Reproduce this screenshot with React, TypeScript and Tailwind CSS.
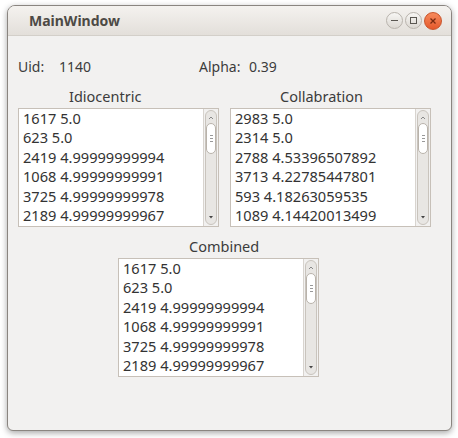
import React from 'react';

const idio = ['1617 5.0', '623 5.0', '2419 4.99999999994', '1068 4.99999999991', '3725 4.99999999978', '2189 4.99999999967'];
const collab = ['2983 5.0', '2314 5.0', '2788 4.53396507892', '3713 4.22785447801', '593 4.18263059535', '1089 4.14420013499'];

function ScrollBar() {
  return (
    <div className="w-[15px] h-full border-l border-[#d8d4cf] bg-[#f2f1f0] flex flex-col items-center py-[1px]">
      <div className="w-[12px] flex-1 rounded-full border border-[#c9c4bd] bg-[#e8e6e3] flex flex-col items-center">
        <svg width="10" height="10" viewBox="0 0 10 10" className="mt-[2px]">
          <path d="M3 6 L5 4 L7 6" fill="none" stroke="#888" strokeWidth="1" />
        </svg>
        <div className="w-[10px] h-[31px] rounded-full border border-[#b9b3ab] bg-white flex flex-col items-center justify-center gap-[2px]">
          <div className="w-[3px] h-[1px] bg-[#999]" />
          <div className="w-[3px] h-[1px] bg-[#999]" />
          <div className="w-[3px] h-[1px] bg-[#999]" />
        </div>
        <div className="flex-1" />
        <svg width="10" height="10" viewBox="0 0 10 10" className="mb-[2px]">
          <path d="M3 4 L7 4 L5 6.5 Z" fill="#444" />
        </svg>
      </div>
    </div>
  );
}

function ListBox({ title, rows, labelClass }: { title: string; rows: string[]; labelClass: string }) {
  return (
    <div className="flex flex-col w-[201px]">
      <div className={`text-[14.5px] leading-[20px] text-[#3c3c3c] ${labelClass}`}>{title}</div>
      <div className="w-[201px] h-[119px] border border-[#c7c0b8] bg-white flex">
        <div className="flex-1 pl-[4px] pt-[0px] text-[14.6px] leading-[19.4px] text-[#333] overflow-hidden">
          {rows.map((r) => (
            <div key={r}>{r}</div>
          ))}
        </div>
        <ScrollBar />
      </div>
    </div>
  );
}

export default function App() {
  return (
    <div className="w-[458px] h-[438px] bg-white pl-[7px] pt-[5px]" style={{ fontFamily: '"Noto Sans", "Open Sans", sans-serif' }}>
      <div className="w-[445px] h-[426px] rounded-t-[8px] rounded-b-[6px] border border-[#8a8580] bg-[#f2f1f0] shadow-[0_2px_6px_rgba(0,0,0,0.35)] overflow-hidden flex flex-col">
        <div className="h-[30px] bg-gradient-to-b from-[#f4f2ef] to-[#e3dfda] border-b border-[#d3cfc9] flex items-center pl-[21px] pr-[9px]">
          <div className="text-[14px] font-bold text-[#4d4a45] flex-1">MainWindow</div>
          <div className="flex items-center gap-[2px]">
            <div className="w-[17px] h-[17px] rounded-full border border-[#b8b3ac] bg-gradient-to-b from-[#f7f6f4] to-[#dcd8d2] flex items-center justify-center">
              <div className="w-[7px] h-[1px] bg-[#5a5752]" />
            </div>
            <div className="w-[17px] h-[17px] rounded-full border border-[#b8b3ac] bg-gradient-to-b from-[#f7f6f4] to-[#dcd8d2] flex items-center justify-center">
              <div className="w-[7px] h-[7px] border border-[#5a5752]" />
            </div>
            <div className="w-[18px] h-[18px] rounded-full border border-[#c8532a] bg-gradient-to-b from-[#f68a5c] to-[#e5582a] flex items-center justify-center">
              <svg width="8" height="8" viewBox="0 0 8 8">
                <path d="M1.5 1.5 L6.5 6.5 M6.5 1.5 L1.5 6.5" stroke="#7a2a10" strokeWidth="1.3" />
              </svg>
            </div>
          </div>
        </div>
        <div className="flex-1 flex flex-col">
          <div className="flex items-center h-[20px] mt-[20px] pl-[10px] text-[14px] text-[#3c3c3c]">
            <span className="w-[41px]">Uid:</span>
            <span className="w-[140px]">1140</span>
            <span className="w-[50px]">Alpha:</span>
            <span>0.39</span>
          </div>
          <div className="flex gap-[11px] pl-[10px] mt-[10px]">
            <ListBox title="Idiocentric" rows={idio} labelClass="pl-[51px] mb-[2px]" />
            <ListBox title="Collabration" rows={collab} labelClass="pl-[50px] mb-[2px]" />
          </div>
          <div className="flex pl-[110px] mt-[9px]">
            <ListBox title="Combined" rows={idio} labelClass="pl-[71px] mb-[2px]" />
          </div>
        </div>
      </div>
    </div>
  );
}
